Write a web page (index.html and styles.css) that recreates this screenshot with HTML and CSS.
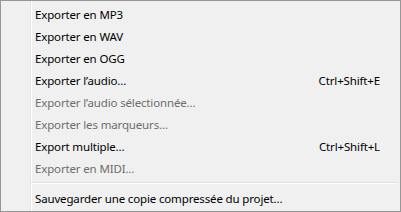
FILE: index.html
```html
<html>
<head>
<title>Exporter</title>
<link rel="stylesheet" href="styles.css">
</head>
<body>
<div class="menu">
    <div class="item"><span class="label">Exporter en MP3</span></div>
    <div class="item"><span class="label">Exporter en WAV</span></div>
    <div class="item"><span class="label">Exporter en OGG</span></div>
    <div class="item"><span class="label">Exporter l’audio...</span><span class="shortcut">Ctrl+Shift+E</span></div>
    <div class="item disabled"><span class="label">Exporter l’audio sélectionnée...</span></div>
    <div class="item disabled"><span class="label">Exporter les marqueurs...</span></div>
    <div class="item"><span class="label">Export multiple...</span><span class="shortcut">Ctrl+Shift+L</span></div>
    <div class="item disabled"><span class="label">Exporter en MIDI...</span></div>
    <div class="separator"></div>
    <div class="item"><span class="label">Sauvegarder une copie compressée du projet...</span></div>
</div>
</body>
</html>
```

FILE: styles.css
```css
body {
    margin: 0;
    font-family: "Noto Sans", "Open Sans", sans-serif;
    font-size: 11.5px;
    letter-spacing: -0.15px;
    color: #000000;
    background-color: #FFFFFF;
}

.menu {
    width: 401px;
    height: 212px;
    box-sizing: border-box;
    border: 1px solid #979797;
    padding: 2px;
    background: linear-gradient(to right, #F0F0F0 29px, #E2E3E3 29px, #E2E3E3 30px, #FFFFFF 30px, #FFFFFF 31px, #F0F0F0 31px);
}

.item {
    display: flex;
    align-items: center;
    justify-content: space-between;
    height: 22px;
    padding-left: 32px;
    padding-right: 18px;
    white-space: nowrap;
}

.disabled {
    color: #6D6D6D;
}

.separator {
    margin: 3px 0 3px 28px;
    border-top: 1px solid #E0E0E0;
    border-bottom: 1px solid #FFFFFF;
}
```
